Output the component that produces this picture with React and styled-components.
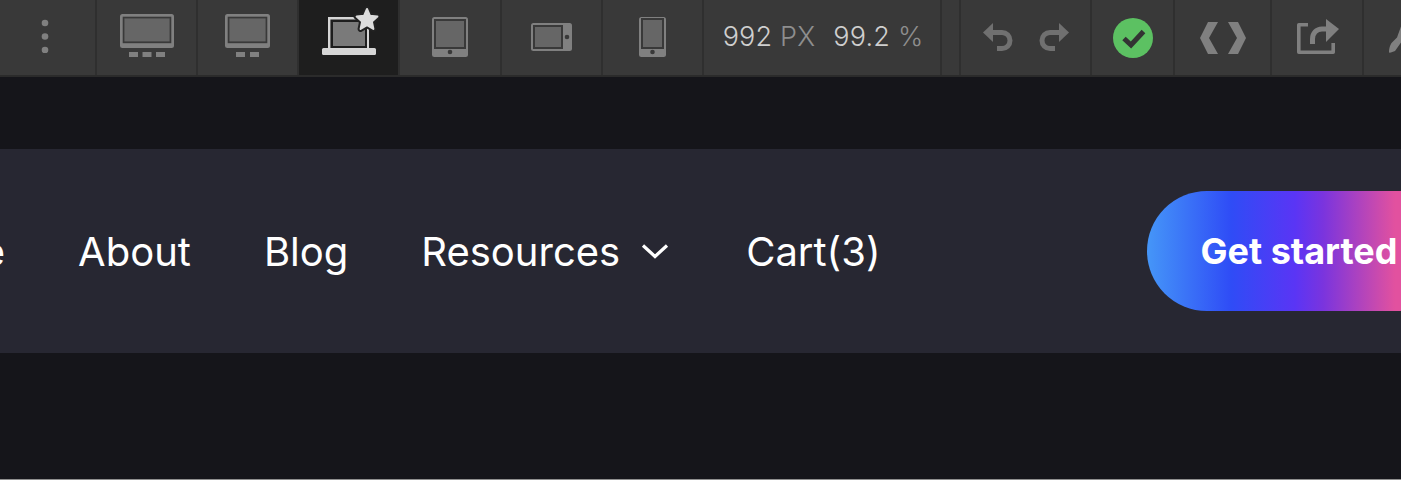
import React from 'react';
import styled, { createGlobalStyle } from 'styled-components';

const Global = createGlobalStyle`
html, body { margin: 0; padding: 0; background: #15151a; }
body { font-family: Inter, "Liberation Sans", sans-serif; overflow: hidden; }
`;

const Page = styled.div`
width: 1401px;
height: 480px;
display: flex;
flex-direction: column;
overflow: hidden;
border-bottom: 1px solid #8f8f8f;
box-sizing: border-box;
`;

const Toolbar = styled.div`
height: 77px;
flex: none;
display: flex;
background: #393939;
border-bottom: 2px solid #2b2b2b;
box-sizing: border-box;
`;

const Cell = styled.div`
flex: none;
width: ${(p) => p.$w}px;
box-sizing: border-box;
display: flex;
align-items: center;
justify-content: center;
padding-bottom: ${(p) => p.$lift || 0}px;
border-right: ${(p) => (p.$last ? 'none' : '2px solid #2f2f2f')};
background: ${(p) => (p.$active ? '#1e1e1e' : 'transparent')};
`;

const Metrics = styled.div`
display: flex;
align-items: baseline;
padding-left: 20px;
width: 100%;
font-size: 27px;
font-weight: 300;
letter-spacing: 0.2px;
color: #cfcfcf;
white-space: nowrap;
`;

const MetricValue = styled.span`
margin-right: 18px;
`;

const Unit = styled.em`
font-style: normal;
color: #8e8e8e;
`;

const Band = styled.div`
height: 204px;
flex: none;
margin-top: 72px;
background: #272732;
display: flex;
align-items: center;
overflow: hidden;
`;

const Nav = styled.nav`
display: flex;
align-items: center;
gap: 73px;
margin-left: -107px;
flex: none;
`;

const NavLink = styled.a`
display: flex;
align-items: center;
gap: 21px;
color: #fff;
font-size: 40px;
font-weight: 400;
white-space: nowrap;
`;

const ChevronIcon = styled.svg`
margin-right: 4px;
`;

const Cta = styled.a`
flex: none;
margin-left: 266px;
width: 400px;
height: 120px;
box-sizing: border-box;
padding-left: 54px;
display: flex;
align-items: center;
border-radius: 60px;
background: linear-gradient(90deg, #4596f8 0%, #2f4cf6 21%, #5a35f5 37%, #7a34de 44%, #e2519f 62%, #e2519f 100%);
color: #fff;
font-size: 36px;
font-weight: 700;
white-space: nowrap;
`;

const UndoGroup = styled.div`
display: flex;
gap: 26px;
`;

const UndoIcon = styled.svg`
transform: ${(p) => (p.$flip ? 'scaleX(-1)' : 'none')};
`;

const DotsIcon = styled.svg`
margin-right: 6px;
`;

const Gray = '#808080';
const Dim = '#707070';
const Screen = '#666666';
const Dark = '#393939';

// monitor with little stand pieces
const Monitor = ({ w, feet }) => (
  <svg width={w} height="44" viewBox={`0 0 ${w} 44`}>
    <rect width={w} height="34" rx="2.5" fill={Gray} />
    <rect x="2.7" y="2.7" width={w - 5.4} height="26.5" fill={Dark} />
    <rect x="4.4" y="4.4" width={w - 8.8} height="23" fill={Screen} />
    {feet.map((x) => (
      <rect key={x} x={x} y="38" width="9" height="5" fill={Gray} />
    ))}
  </svg>
);

const STAR = 'M48 3l3 6.8 7.4.8-5.5 5 1.5 7.3-6.4-3.7-6.4 3.7 1.5-7.3-5.5-5 7.4-.8z';

const Laptop = () => (
  <svg width="60" height="50" viewBox="0 0 60 50">
    <path d="M10.2 43V12.2h38.6V43" fill="none" stroke="#d6d6d6" strokeWidth="2.4" />
    <rect x="12" y="14" width="36" height="28" fill="#1e1e1e" />
    <rect x="14" y="16" width="32" height="24" fill="#7a7a7a" />
    <rect x="3" y="42" width="54" height="7" rx="1.5" fill="#d6d6d6" />
    <path d={STAR} fill="#222" stroke="#222" strokeWidth="6" strokeLinejoin="round" />
    <path d={STAR} fill="#dcdcdc" stroke="#dcdcdc" strokeWidth="2" strokeLinejoin="round" />
  </svg>
);

// w,h outer, s = screen x,y,w,h, dot position
const Device = ({ w, h, s, dot }) => (
  <svg width={w} height={h} viewBox={`0 0 ${w} ${h}`}>
    <rect width={w} height={h} rx="2.5" fill={Gray} />
    <rect x={s[0] - 2} y={s[1] - 2} width={s[2] + 4} height={s[3] + 4} fill={Dark} />
    <rect x={s[0]} y={s[1]} width={s[2]} height={s[3]} fill={Screen} />
    <circle cx={dot[0]} cy={dot[1]} r="2.3" fill={Dark} />
  </svg>
);

const Undo = ({ flip }) => (
  <UndoIcon $flip={flip} width="30" height="30" viewBox="0 0 30 30">
    <path d="M0 9.5L10 0v19z" fill={Dim} />
    <path d="M8 9.5h11a8 8 0 0 1 0 16h-5" fill="none" stroke={Dim} strokeWidth="5" />
  </UndoIcon>
);

const Check = () => (
  <svg width="40" height="40" viewBox="0 0 40 40">
    <circle cx="20" cy="20" r="20" fill="#5cc162" />
    <path d="M11 20.5l7 6.5 12.5-13.5" fill="none" stroke="#333" strokeWidth="5" />
  </svg>
);

const Code = () => (
  <svg width="46" height="32" viewBox="0 0 46 32">
    <path d="M18 0H8L0 16l8 16h10L9 16zM28 0h10l8 16-8 16H28l9-16z" fill={Gray} />
  </svg>
);

const Share = () => (
  <svg width="44" height="36" viewBox="0 0 44 36">
    <path d="M13 5.8H3.8v27.4h34.4V24" fill="none" stroke={Gray} strokeWidth="3.6" strokeLinejoin="round" />
    <path d="M17.5 25v-5c0-6 4-10 9.5-10h5" fill="none" stroke={Gray} strokeWidth="5" />
    <path d="M31 0l13 10-13 13z" fill={Gray} />
  </svg>
);

const Brush = () => (
  <svg width="37" height="36" viewBox="0 0 37 36">
    <path d="M25 33.5C25 28 27 24 29 22.5l4-4 4-11v16l-6 8.500C29 33 26 34 25 33.500z" fill={Gray} />
  </svg>
);

const Dots = () => (
  <DotsIcon width="8" height="34" viewBox="0 0 8 34">
    <circle cx="4" cy="4" r="3.3" fill={Gray} />
    <circle cx="4" cy="17.500" r="3.3" fill={Gray} />
    <circle cx="4" cy="31" r="3.3" fill={Gray} />
  </DotsIcon>
);

const Chevron = () => (
  <ChevronIcon width="28" height="16" viewBox="0 0 28 16">
    <path d="M2 2.500l12 11 12-11" fill="none" stroke="#fff" strokeWidth="3.2" />
  </ChevronIcon>
);

export default function App() {
  return (
    <Page>
      <Global />
      <Toolbar>
        <Cell $w={97} $lift={3}><Dots /></Cell>
        <Cell $w={101} $lift={3}><Monitor w={54} feet={[9, 22.5, 36]} /></Cell>
        <Cell $w={101} $lift={3}><Monitor w={45} feet={[11, 25]} /></Cell>
        <Cell $w={101} $lift={13} $active><Laptop /></Cell>
        <Cell $w={102} $lift={1}><Device w={36} h={40} s={[4, 4, 28, 26]} dot={[18, 35]} /></Cell>
        <Cell $w={101} $lift={1}><Device w={41} h={28} s={[4, 4, 26, 20]} dot={[36, 14]} /></Cell>
        <Cell $w={101} $lift={1}><Device w={27} h={40} s={[4, 3, 19, 27]} dot={[13.5, 35]} /></Cell>
        <Cell $w={238} $lift={2}>
          <Metrics>
            <MetricValue>992 <Unit>PX</Unit></MetricValue>
            <MetricValue>99.2 <Unit>%</Unit></MetricValue>
          </Metrics>
        </Cell>
        <Cell $w={19} />
        <Cell $w={131}>
          <UndoGroup><Undo /><Undo flip /></UndoGroup>
        </Cell>
        <Cell $w={83}><Check /></Cell>
        <Cell $w={97}><Code /></Cell>
        <Cell $w={92} $lift={1}><Share /></Cell>
        <Cell $w={37} $last $lift={1}><Brush /></Cell>
      </Toolbar>
      <Band>
        <Nav>
          <NavLink>Home</NavLink>
          <NavLink>About</NavLink>
          <NavLink>Blog</NavLink>
          <NavLink>Resources <Chevron /></NavLink>
          <NavLink>Cart(3)</NavLink>
        </Nav>
        <Cta>Get started</Cta>
      </Band>
    </Page>
  );
}
